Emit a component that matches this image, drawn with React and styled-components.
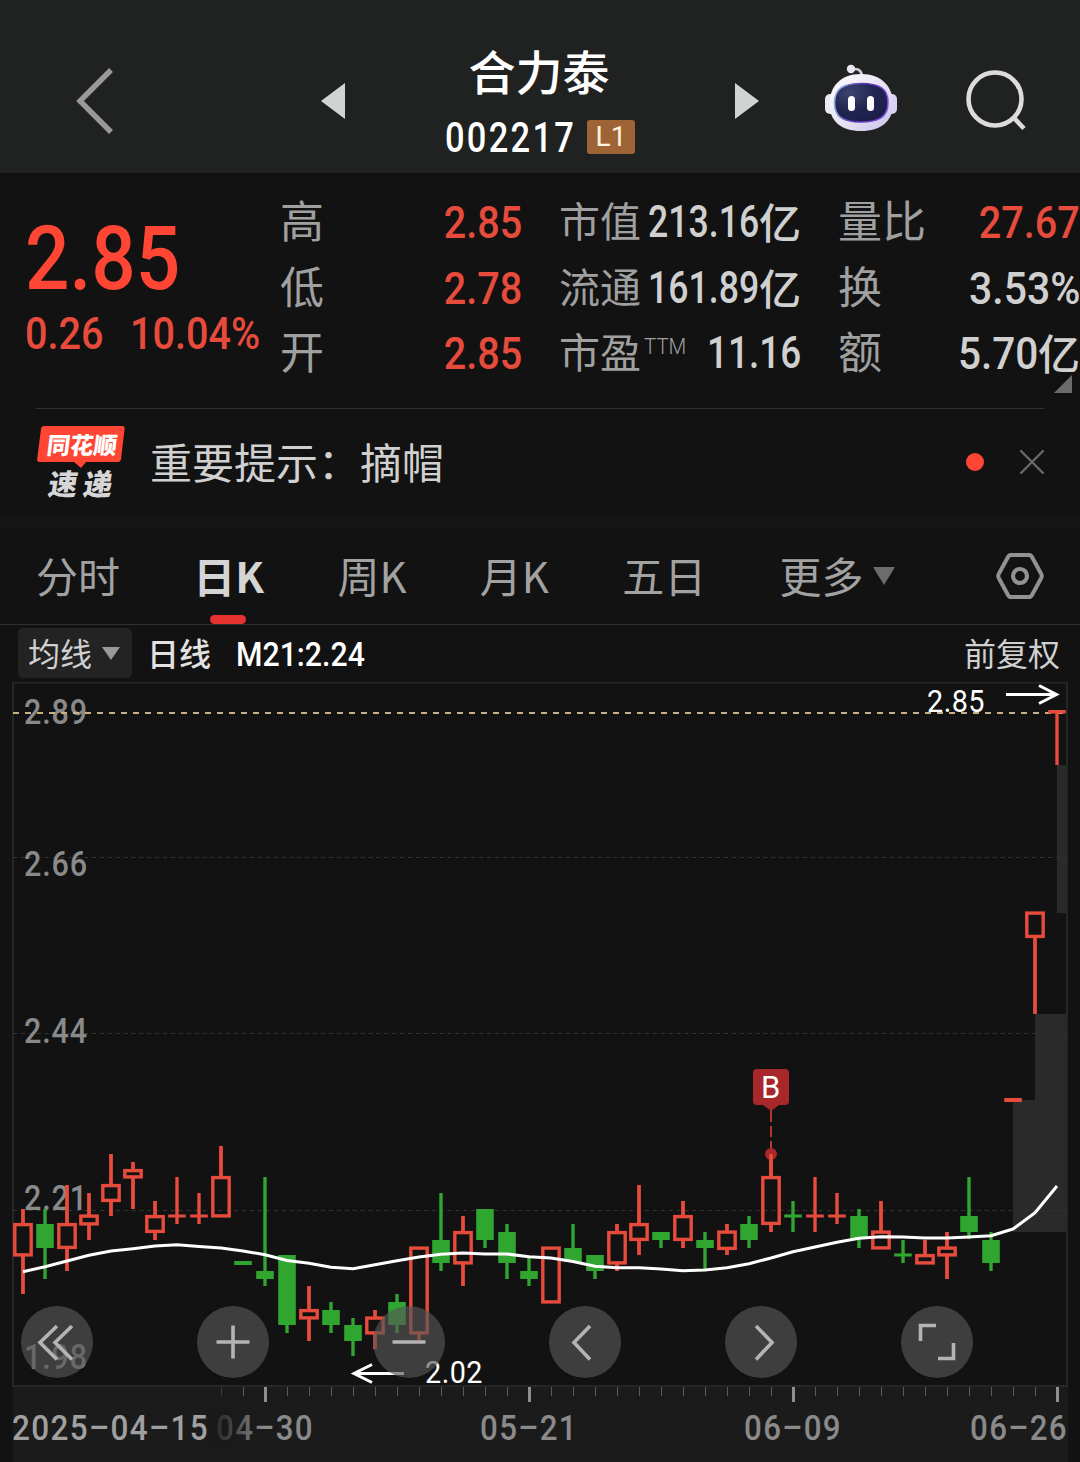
import React from "react";
import styled, { createGlobalStyle } from "styled-components";

const RED = "#e64b3c";
const GREEN = "#30a52f";

// x of the first candle and the distance between two candles
const FIRST_X = 23;
const STEP = 22;

// [direction, high, body top, body bottom, low]
const candles = [
  ["up", 1209, 1223, 1256.5, 1294],
  ["down", 1209, 1224, 1248, 1279],
  ["up", 1185, 1223, 1249, 1271],
  ["up", 1193, 1214.5, 1225.5, 1240],
  ["up", 1154, 1184, 1202, 1216],
  ["up", 1162, 1169, 1178.5, 1209],
  ["up", 1201, 1215, 1233, 1240],
  ["flatUp", 1177, 1214.5, 1217.5, 1224],
  ["flatUp", 1193, 1214.5, 1217.5, 1224],
  ["up", 1146, 1176, 1217.5, 1217],
  ["down", 1261, 1261, 1265, 1265],
  ["down", 1177, 1271, 1279, 1286],
  ["down", 1255, 1255, 1325, 1333],
  ["up", 1286, 1309, 1319.5, 1341],
  ["down", 1302, 1310, 1325, 1333],
  ["down", 1318, 1325, 1341, 1356],
  ["up", 1310, 1316.5, 1334.5, 1349],
  ["down", 1294, 1302, 1325, 1333],
  ["up", 1248, 1246.5, 1334.5, 1340],
  ["down", 1193, 1240, 1263, 1271],
  ["up", 1216, 1231, 1264.5, 1286],
  ["down", 1209, 1209, 1240, 1248],
  ["down", 1224, 1232, 1263, 1279],
  ["down", 1257, 1271, 1279, 1286],
  ["up", 1248, 1246.5, 1303.5, 1303],
  ["down", 1224, 1248, 1262, 1262],
  ["down", 1255, 1255, 1271, 1279],
  ["up", 1224, 1231, 1264.5, 1271],
  ["up", 1185, 1223, 1241, 1255],
  ["down", 1232, 1232, 1240, 1248],
  ["up", 1201, 1215, 1241, 1248],
  ["down", 1232, 1240, 1248, 1269],
  ["up", 1224, 1230.5, 1250, 1255],
  ["down", 1216, 1224, 1240, 1248],
  ["up", 1154, 1176, 1225, 1232],
  ["flatDown", 1201, 1214.5, 1217.5, 1232],
  ["flatUp", 1177, 1214.5, 1217.5, 1232],
  ["flatUp", 1193, 1214.5, 1217.5, 1224],
  ["down", 1209, 1216, 1238.5, 1248],
  ["up", 1201, 1230.5, 1249.5, 1249],
  ["flatDown", 1240, 1253.5, 1256.5, 1263],
  ["up", 1240, 1254, 1264.5, 1264],
  ["up", 1232, 1246.5, 1256.5, 1279],
  ["down", 1177, 1216, 1232, 1239],
  ["down", 1232, 1240, 1263, 1271],
  ["flatUp", 1098, 1098, 1102, 1102],
  ["up", 912, 911.5, 938, 1014],
  ["flatUp", 710, 710, 713.5, 765],
];

const average = [
  1271.7, 1266.7, 1261, 1255.3, 1251, 1248.7, 1246, 1244.8, 1246.5, 1248, 1251,
  1254.7, 1260.5, 1263.3, 1267.3, 1268.7, 1264.7, 1260.7, 1257, 1254.3, 1253,
  1254, 1254, 1256.7, 1258, 1261.5, 1266.3, 1267.7, 1267.7, 1269, 1270.8, 1270,
  1267.7, 1263.7, 1258, 1251.7, 1247, 1242.3, 1238.3, 1236.8, 1237, 1238, 1238,
  1237, 1235.7, 1229, 1212.7, 1186,
];

const priceLabels = [
  ["2.89", 724],
  ["2.66", 875.5],
  ["2.44", 1042.5],
  ["2.21", 1210],
  ["1.98", 1369],
];

const stats = [
  [
    { label: "高", value: "2.85", red: true, scale: 0.88 },
    { label: "低", value: "2.78", red: true, scale: 0.88 },
    { label: "开", value: "2.85", red: true, scale: 0.88 },
  ],
  [
    { label: "市值", value: "213.16", unit: "亿", small: true, scale: 0.81 },
    { label: "流通", value: "161.89", unit: "亿", small: true, scale: 0.81 },
    { label: "市盈", sup: "TTM", value: "11.16", small: true, scale: 0.84 },
  ],
  [
    { label: "量比", value: "27.67", red: true, scale: 0.88 },
    { label: "换", value: "3.53%", scale: 0.91 },
    { label: "额", value: "5.70", unit: "亿", scale: 0.9 },
  ],
];

const tabs = ["分时", "日K", "周K", "月K", "五日"];

const Candle = ({ data, x }) => {
  const [type, high, top, bottom, low] = data;
  if (type === "up") {
    return (
      <g stroke={RED} fill="none">
        {high < top && <path d={`M${x} ${high}V${top + 1}`} strokeWidth="3.8" />}
        {low > bottom && (
          <path d={`M${x} ${bottom - 1}V${low}`} strokeWidth="3.8" />
        )}
        <rect
          x={x - 8.2}
          y={top + 1.6}
          width="16.4"
          height={bottom - top - 3.2}
          strokeWidth="3.4"
        />
      </g>
    );
  }
  const color = type === "flatUp" ? RED : GREEN;
  return (
    <g fill={color}>
      <rect x={x - 1.7} y={high} width="3.4" height={low - high} />
      <rect x={x - 8.8} y={top} width="17.6" height={bottom - top} />
    </g>
  );
};

const Chart = () => {
  const points = average
    .map((y, index) => `${FIRST_X + index * STEP},${y}`)
    .join(" ");

  return (
    <ChartSvg viewBox="0 682 1080 780">
      <defs>
        <linearGradient id="dateFade" x1="0" x2="1">
          <stop offset="0" stopColor="#191919" stopOpacity="0.9" />
          <stop offset="0.35" stopColor="#191919" stopOpacity="0.68" />
          <stop offset="0.65" stopColor="#191919" stopOpacity="0.35" />
          <stop offset="1" stopColor="#1b1b1b" stopOpacity="0" />
        </linearGradient>
      </defs>
      <rect x="13" y="1387" width="1055" height="75" fill="#1b1b1b" />
      <g fill="#2a2a2a">
        <rect x="1057" y="765" width="11" height="148" />
        <rect x="1035" y="1014" width="33" height="87" />
        <rect x="1013" y="1100" width="55" height="132" />
      </g>
      <rect
        x="13"
        y="682.5"
        width="1054"
        height="703.5"
        fill="none"
        stroke="#262626"
        strokeWidth="2"
      />
      <g stroke="#333" strokeDasharray="4 3.9">
        <path d="M13 857.5H1067" />
        <path d="M13 1033.5H1067" />
        <path d="M13 1210.5H1067" />
      </g>
      <ChartText $size={35} $weight={500} $spacing={1}>
        {priceLabels.map(([text, y]) => (
          <text key={text} x="24" y={y} textLength="64" lengthAdjust="spacingAndGlyphs">
            {text}
          </text>
        ))}
      </ChartText>
      <path d="M13 713H1067" stroke="#c9b184" strokeWidth="2" strokeDasharray="6 6" />

      {candles.map((data, index) => (
        <Candle key={index} data={data} x={FIRST_X + index * STEP} />
      ))}
      <polyline points={points} fill="none" stroke="#fff" strokeWidth="3" strokeLinejoin="round" />

      <g stroke="#b93430" strokeWidth="2">
        <path d="M771 1109V1122M771 1126V1137M771 1141V1150" />
      </g>
      <circle cx="771" cy="1154" r="6" fill="#a8272a" />
      <path d="M771 1154V1176" stroke={RED} strokeWidth="3.6" />
      <path
        d="M757 1069H785Q789 1069 789 1073V1101Q789 1105 785 1105H779L771 1111L763 1105H757Q753 1105 753 1101V1073Q753 1069 757 1069Z"
        fill="#a8272a"
      />
      <ChartText $size={31} $white>
        <text x="761" y="1098">
          B
        </text>
      </ChartText>

      <ChartText $size={30.5} $white $spacing={0.5}>
        <text x="927" y="712" textLength="58" lengthAdjust="spacingAndGlyphs">
          2.85
        </text>
        <text x="425" y="1383" textLength="58" lengthAdjust="spacingAndGlyphs">
          2.02
        </text>
      </ChartText>
      <g fill="none" stroke="#fff" strokeWidth="3">
        <path d="M1006 694.5H1056M1039 685.5L1056.5 694.5L1039 703.5" />
        <path d="M404 1373.5H354M372 1364.5L354 1373.5L372 1382.5" />
      </g>

      {Array.from({ length: 39 }, (_, index) => {
        const x = 221 + index * STEP;
        const major = (index - 2) % 12 === 0;
        return (
          <rect
            key={x}
            x={major ? x - 1 : x}
            y="1387"
            width={major ? 3 : 1}
            height={major ? 15 : 9}
            fill={major ? "#8f8f8f" : index ? "#5a5a5a" : "#3a3a3a"}
          />
        );
      })}
      <ChartText $size={35} $weight={500} $spacing={1.5}>
        <DateText x="216" text="04–30" />
        <rect x="210" y="1408" width="54" height="40" fill="url(#dateFade)" />
        <DateText x="480" text="05–21" />
        <DateText x="744" text="06–09" />
        <DateText x="970" text="06–26" />
        <text
          x="12"
          y="1440"
          textLength="197"
          fill="#a0a0a0"
          lengthAdjust="spacingAndGlyphs"
        >
          2025–04–15
        </text>
      </ChartText>
    </ChartSvg>
  );
};

const DateText = ({ x, text }) => (
  <text x={x} y="1440" textLength="98" lengthAdjust="spacingAndGlyphs">
    {text}
  </text>
);

const Robot = () => (
  <svg width="72" height="68" viewBox="0 0 72 68">
    <defs>
      <linearGradient id="shell" x1="0" y1="0" x2="1" y2="1">
        <stop offset="0" stopColor="#ffffff" />
        <stop offset="0.55" stopColor="#e6e1f5" />
        <stop offset="1" stopColor="#c9c1e8" />
      </linearGradient>
      <linearGradient id="rim" x1="0" y1="0.3" x2="1" y2="0.5">
        <stop offset="0" stopColor="#8fb6e6" />
        <stop offset="0.5" stopColor="#5a2fb5" />
        <stop offset="1" stopColor="#7a4fe0" />
      </linearGradient>
      <radialGradient id="face" cx="0.3" cy="0.25" r="0.9">
        <stop offset="0" stopColor="#3d4470" />
        <stop offset="0.5" stopColor="#20264f" />
        <stop offset="1" stopColor="#1b1c48" />
      </radialGradient>
    </defs>
    <path d="M26 5.5Q36 3 37 12" fill="none" stroke="#cfcdda" strokeWidth="2.6" />
    <circle cx="26" cy="5" r="4.2" fill="#e9e8f2" />
    <rect x="0" y="30" width="12" height="20" rx="5" fill="#ebe8f6" />
    <rect x="60" y="30" width="12" height="20" rx="5" fill="#d9d2f0" />
    <path
      d="M36 10C57 10 68 23 68 40C68 57 56 67 36 67C16 67 4.5 57 4.5 40C4.5 23 15 10 36 10Z"
      fill="url(#shell)"
    />
    <path
      d="M36 19.5C55 19.5 63 25 63 38.5C63 53 54 58 36 58C18 58 9.5 53 9.5 38.5C9.5 25 18 19.5 36 19.5Z"
      fill="url(#face)"
      stroke="url(#rim)"
      strokeWidth="1.6"
    />
    <rect x="23" y="32" width="7" height="15" rx="3.5" fill="#fff" />
    <rect x="42" y="32" width="7" height="15" rx="3.5" fill="#fff" />
  </svg>
);

const BrandLogo = () => (
  <LogoSvg width="88" height="84" viewBox="0 0 88 84">
    <path
      d="M7 0H85Q88 0 87.6 3L84 33Q83.5 36 81 36H49L44 42L37 36H3Q-0.2 36 0.2 33L4 3Q4.5 0 7 0Z"
      fill="#ff4534"
    />
    <text
      transform="translate(9 27.5) skewX(-7)"
      fontSize="23.5"
      textLength="70"
      lengthAdjust="spacingAndGlyphs"
      fill="#fff"
    >
      同花顺
    </text>
    <g transform="translate(9 68.5) skewX(-9)" fontSize="29" fill="#d6d6d6">
      <text x="1" y="0">
        速
      </text>
      <text x="36" y="0">
        递
      </text>
    </g>
  </LogoSvg>
);

const controls = [
  "M36 20L19 36.5L36 53.5M51 20L34 36.5L51 53.5",
  "M19.5 36H52.5M36 19.5V52.5",
  "M19.5 36H52.5",
  "M41 20L25 36.5L41 53.5",
  "M31 20L47 36.5L31 53.5",
  "M19.5 35V19.5H35M37 52.5H52.5V37",
];

const App = () => {
  return (
    <Page>
      <GlobalStyle />
      <Header>
        <BackIcon width="38" height="66" viewBox="0 0 38 66">
          <path d="M36 2L5 33L36 64" fill="none" stroke="#999" strokeWidth="5.4" />
        </BackIcon>
        <Arrow width="24" height="36" viewBox="0 0 24 36">
          <path d="M24 0V36L0 18Z" fill="#d2d4d3" />
        </Arrow>
        <TitleBox>
          <StockName>合力泰</StockName>
          <CodeRow>
            <Code>002217</Code>
            <Level>L1</Level>
          </CodeRow>
        </TitleBox>
        <Arrow width="24" height="36" viewBox="0 0 24 36">
          <path d="M0 0V36L24 18Z" fill="#d2d4d3" />
        </Arrow>
        <RobotButton>
          <Robot />
        </RobotButton>
        <SearchIcon width="62" height="64" viewBox="0 0 62 64">
          <circle cx="30" cy="31" r="26.5" fill="none" stroke="#dcdcdc" strokeWidth="4.6" />
          <path d="M48 49L59 60.5" stroke="#dcdcdc" strokeWidth="4.6" />
        </SearchIcon>
      </Header>

      <Quote>
        <PriceBox>
          <Price>2.85</Price>
          <ChangeRow>
            <Change>0.26</Change>
            <Change>10.04%</Change>
          </ChangeRow>
        </PriceBox>
        {stats.map((column, index) => (
          <StatColumn key={index}>
            {column.map((item) => (
              <Stat key={item.label}>
                <StatLabel $small={item.small}>
                  {item.label}
                  {item.sup && <Sup>{item.sup}</Sup>}
                </StatLabel>
                <StatValue $red={item.red}>
                  <Digits $scale={item.scale} $small={item.small}>
                    {item.value}
                  </Digits>
                  {item.unit && <Unit>{item.unit}</Unit>}
                </StatValue>
              </Stat>
            ))}
          </StatColumn>
        ))}
        <Corner />
      </Quote>

      <Notice>
        <BrandLogo />
        <NoticeText>重要提示：摘帽</NoticeText>
        <Dot />
        <svg width="24" height="24" viewBox="0 0 24 24">
          <path d="M1 1L23 23M23 1L1 23" stroke="#686868" strokeWidth="2.4" strokeLinecap="round" />
        </svg>
      </Notice>

      <Tabs>
        {tabs.map((name) => (
          <Tab key={name} $active={name === "日K"}>
            {name}
          </Tab>
        ))}
        <Tab>
          更多
          <MoreIcon width="24" height="20" viewBox="0 0 24 20">
            <path d="M1 1H23L12 19Z" fill="#6c6c6c" />
          </MoreIcon>
        </Tab>
        <Settings width="50" height="50" viewBox="0 0 50 50" fill="none" stroke="#929292">
          <path
            d="M16 4H34Q36 4 37 6L46 22.5Q47.5 25 46 27.5L37 44Q36 46 34 46H16Q14 46 13 44L4 27.5Q2.5 25 4 22.5L13 6Q14 4 16 4Z"
            strokeWidth="4"
          />
          <circle cx="25" cy="25" r="7" strokeWidth="4.2" />
        </Settings>
      </Tabs>

      <ChartBar>
        <AverageSelect>
          <span>均线</span>
          <svg width="18" height="13" viewBox="0 0 18 13">
            <path d="M0 0H18L9 13Z" fill="#9a9a9a" />
          </svg>
        </AverageSelect>
        <LineName>日线</LineName>
        <AverageValue>M21:2.24</AverageValue>
        <Adjust>前复权</Adjust>
      </ChartBar>

      <ChartArea>
        <Chart />
        <Controls>
          {controls.map((path) => (
            <ControlButton key={path}>
              <svg width="72" height="72" viewBox="0 0 72 72">
                <path d={path} fill="none" stroke="#b4b4b4" strokeWidth="3.6" />
              </svg>
            </ControlButton>
          ))}
        </Controls>
      </ChartArea>
    </Page>
  );
};

export default App;

const GlobalStyle = createGlobalStyle`
  * {
    box-sizing: border-box;
  }

  body {
    margin: 0;
    background: #121212;
  }

  svg {
    display: block;
    flex-shrink: 0;
  }
`;

const Page = styled.div`
  width: 1080px;
  height: 1462px;
  overflow: hidden;
  display: flex;
  flex-direction: column;
  background: #121212;
  color: #d0d0d0;
  font-family: "Noto Sans CJK SC", sans-serif;
  white-space: nowrap;
`;

const Header = styled.header`
  height: 173px;
  flex-shrink: 0;
  display: flex;
  align-items: flex-start;
  background: #202221;
`;

const BackIcon = styled.svg`
  margin: 68px 0 0 75px;
`;

const Arrow = styled.svg`
  margin-top: 83px;

  &:nth-of-type(2) {
    margin-left: 208px;
  }
`;

const TitleBox = styled.div`
  width: 390px;
  padding-top: 36px;
  display: flex;
  flex-direction: column;
  align-items: center;
`;

const StockName = styled.div`
  height: 68px;
  line-height: 68px;
  font-size: 47px;
  font-weight: 500;
  color: #fff;
  transform: translateX(-1px);
`;

const CodeRow = styled.div`
  width: 190px;
  height: 50px;
  margin-top: 8px;
  display: flex;
  align-items: center;
  justify-content: space-between;
`;

const Code = styled.span`
  width: 131px;
  padding-top: 2px;
  font: 500 42px/50px Roboto, sans-serif;
  letter-spacing: 2.8px;
  color: #fff;
  transform: scaleX(0.82);
  transform-origin: left;
`;

const Level = styled.span`
  width: 48px;
  height: 34px;
  border-radius: 3px;
  background: #9e6435;
  color: #fff3e0;
  font: 400 28px/34px Roboto, sans-serif;
  text-align: center;
`;

const RobotButton = styled.div`
  margin: 64px 0 0 66px;
`;

const SearchIcon = styled.svg`
  margin: 68px 0 0 68px;
`;

const Quote = styled.section`
  position: relative;
  height: 235px;
  flex-shrink: 0;
  display: grid;
  grid-template-columns: 243px 242px 242px 242px;
  column-gap: 37px;
`;

const PriceBox = styled.div`
  padding: 32px 0 0 25px;
  font-family: Roboto, sans-serif;
  font-weight: 500;
  color: #ff4534;
`;

const Price = styled.div`
  height: 107px;
  font-size: 89px;
  line-height: 108px;
  transform: scaleX(0.88);
  transform-origin: left;
`;

const ChangeRow = styled.div`
  display: flex;
  height: 44px;
`;

const Change = styled.span`
  width: 105px;
  font-size: 45px;
  line-height: 44px;
  color: ${RED};
  transform: scaleX(0.88);
  transform-origin: left;
`;

const StatColumn = styled.div`
  padding-top: 15px;
`;

const Stat = styled.div`
  height: 65.5px;
  display: flex;
  align-items: center;
  justify-content: space-between;
`;

const StatLabel = styled.span`
  position: relative;
  font-size: ${(props) => (props.$small ? "41px" : "44px")};
  line-height: 65px;
  color: #a0a0a0;
  transform: translateY(-1px);
`;

const Sup = styled.span`
  position: absolute;
  left: 100%;
  top: -4px;
  margin-left: 3px;
  font: 300 22px/65px Roboto, sans-serif;
  transform: scaleX(0.93);
  transform-origin: left;
`;

const StatValue = styled.span`
  display: flex;
  align-items: center;
  color: ${(props) => (props.$red ? RED : "#d0d0d0")};
`;

const Digits = styled.span`
  margin: 4px 0 0 ${(props) => (props.$small ? "-30px" : 0)};
  font: 500 ${(props) => (props.$small ? 44 : 45)}px/65px Roboto, sans-serif;
  transform: scaleX(${(props) => props.$scale});
  transform-origin: right;
`;

const Unit = styled.span`
  font-size: 42px;
  font-weight: 500;
  line-height: 65px;
`;

const Corner = styled.i`
  position: absolute;
  right: 8px;
  bottom: 15px;
  border-left: 18px solid transparent;
  border-bottom: 18px solid #6b6b6b;
`;

const Notice = styled.section`
  height: 109px;
  flex-shrink: 0;
  margin: 0 36px;
  padding-bottom: 2px;
  border-top: 1px solid #323232;
  display: flex;
  align-items: center;
`;

const LogoSvg = styled.svg`
  margin: 12px 0 0 1px;
  font-family: "Noto Sans CJK SC", sans-serif;
  font-weight: 900;
`;

const NoticeText = styled.span`
  flex: 1;
  margin-left: 25px;
  padding-bottom: 3px;
  font-size: 42px;
`;

const Dot = styled.i`
  width: 18px;
  height: 18px;
  margin-right: 36px;
  border-radius: 50%;
  background: #ff4534;
`;

const Tabs = styled.nav`
  height: 108px;
  flex-shrink: 0;
  padding: 0 35px 0 36px;
  border-top: 11px solid #161616;
  border-bottom: 1px solid #2f2f2f;
  display: flex;
  align-items: stretch;
  gap: 73.3px;
`;

const Tab = styled.div`
  position: relative;
  display: flex;
  align-items: center;
  gap: 8px;
  padding-bottom: 4px;
  font-size: 42px;
  font-weight: ${(props) => (props.$active ? 700 : 400)};
  color: ${(props) => (props.$active ? "#d4d4d4" : "#a2a2a2")};

  &::after {
    content: "";
    display: ${(props) => (props.$active ? "block" : "none")};
    position: absolute;
    left: calc(50% - 19px);
    bottom: 0;
    width: 36px;
    height: 9px;
    border-radius: 5px;
    background: #e63332;
  }
`;

const MoreIcon = styled.svg`
  margin-top: 4px;
`;

const Settings = styled.svg`
  align-self: center;
  margin-left: auto;
`;

const ChartBar = styled.div`
  height: 57px;
  flex-shrink: 0;
  padding: 3px 20px 4px 18px;
  display: flex;
  align-items: center;
  font-size: 32px;
`;

const AverageSelect = styled.div`
  width: 114px;
  height: 50px;
  padding-left: 10px;
  border-radius: 5px;
  background: #232323;
  display: flex;
  align-items: center;
  gap: 10px;

  span {
    padding-bottom: 3px;
  }
`;

const LineName = styled.span`
  margin-left: 15px;
  padding-bottom: 3px;
  font-weight: 500;
  color: #e2e2e2;
`;

const AverageValue = styled.span`
  margin: 2px 0 0 25px;
  font: 500 34px/50px Roboto, sans-serif;
  color: #fff;
  transform: scaleX(0.89);
  transform-origin: left;
`;

const Adjust = styled.span`
  margin-left: auto;
  padding-bottom: 3px;
`;

const ChartArea = styled.div`
  position: relative;
  flex: 1;
`;

const ChartSvg = styled.svg`
  width: 1080px;
  height: 780px;
`;

const ChartText = styled.g`
  font-family: Roboto, sans-serif;
  font-size: ${(props) => props.$size}px;
  font-weight: ${(props) => props.$weight || 400};
  letter-spacing: ${(props) => props.$spacing || 0}px;
  fill: ${(props) => (props.$white ? "#fff" : "#8a8a8a")};
`;

const Controls = styled.div`
  position: absolute;
  left: 21px;
  top: 624px;
  display: flex;
  gap: 104px;
`;

const ControlButton = styled.div`
  width: 72px;
  height: 72px;
  border-radius: 50%;
  background: rgba(86, 86, 86, 0.65);
`;
